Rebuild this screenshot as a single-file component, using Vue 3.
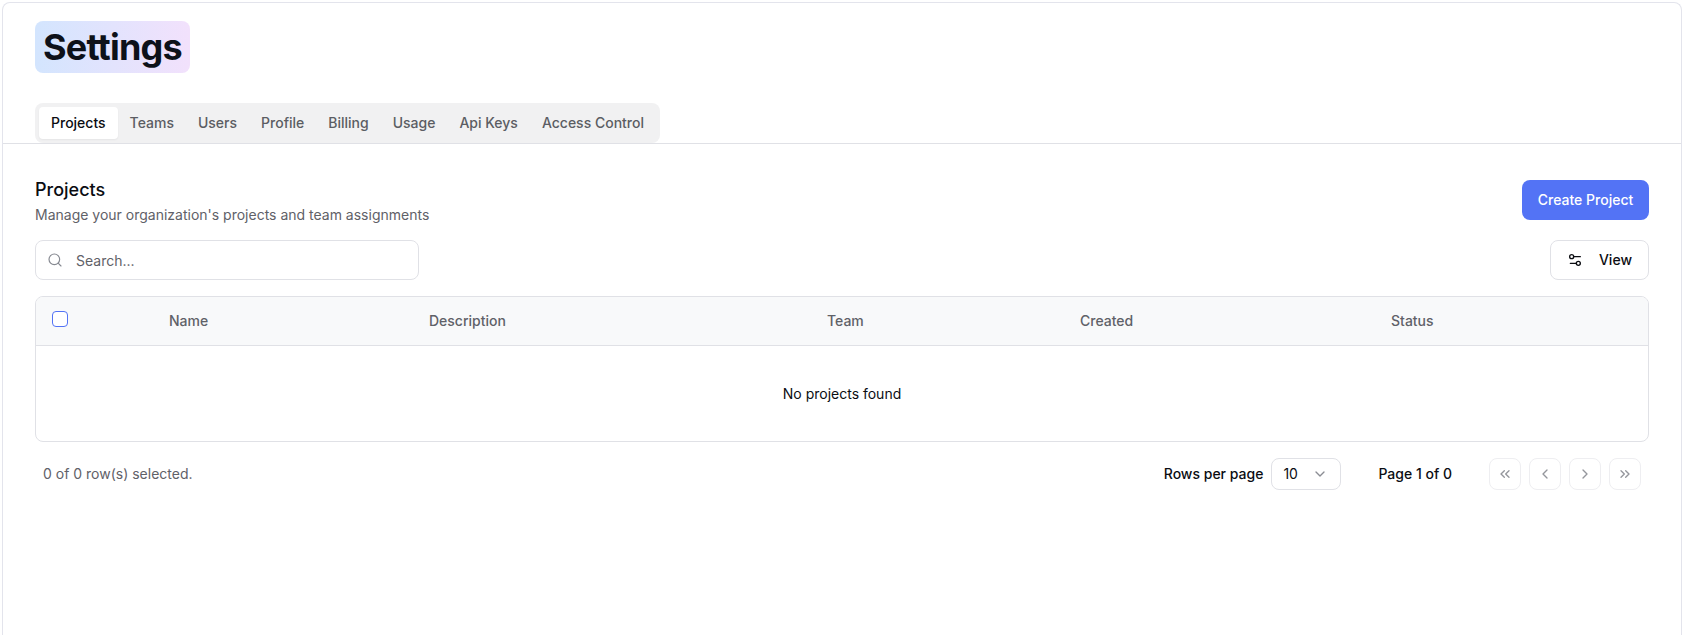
<script setup>
const tabs = ['Projects', 'Teams', 'Users', 'Profile', 'Billing', 'Usage', 'Api Keys', 'Access Control']
const columns = ['Name', 'Description', 'Team', 'Created', 'Status']
const pageButtons = [
  ['m11 17-5-5 5-5', 'm18 17-5-5 5-5'],
  ['m15 18-6-6 6-6'],
  ['m9 18 6-6-6-6'],
  ['m6 17 5-5-5-5', 'm13 17 5-5-5-5'],
]
</script>

<template>
  <div class="frame">
    <header class="top">
      <div class="title-row">
        <h1 class="title">Settings</h1>
      </div>
      <nav class="tabs">
        <button v-for="(tab, i) in tabs" :key="tab" class="tab" :class="{ active: i === 0 }">{{ tab }}</button>
      </nav>
    </header>

    <main class="content">
      <div class="section-head">
        <div>
          <h2 class="section-title">Projects</h2>
          <p class="section-sub">Manage your organization's projects and team assignments</p>
        </div>
        <button class="primary">Create Project</button>
      </div>

      <div class="toolbar">
        <label class="search">
          <svg class="search-icon" viewBox="0 0 24 24" width="16" height="16">
            <circle cx="11" cy="11" r="8" />
            <path d="m21 21-4.3-4.3" />
          </svg>
          <input type="text" placeholder="Search..." />
        </label>
        <button class="view">
          <svg class="view-icon" viewBox="0 0 24 24" width="16" height="16">
            <path d="M20 7h-9" />
            <path d="M14 17H5" />
            <circle cx="17" cy="17" r="3" />
            <circle cx="7" cy="7" r="3" />
          </svg>
          View
        </button>
      </div>

      <div class="table">
        <div class="thead">
          <div class="th"><span class="checkbox"></span></div>
          <div v-for="col in columns" :key="col" class="th">{{ col }}</div>
        </div>
        <div class="empty">No projects found</div>
      </div>

      <div class="footer">
        <span class="selected">0 of 0 row(s) selected.</span>
        <div class="pager">
          <div class="rows">
            <span>Rows per page</span>
            <button class="select">
              10
              <svg class="chev" viewBox="0 0 24 24" width="16" height="16"><path d="m6 9 6 6 6-6" /></svg>
            </button>
          </div>
          <span class="page-label">Page 1 of 0</span>
          <div class="page-buttons">
            <button v-for="(paths, i) in pageButtons" :key="i" class="page-btn">
              <svg viewBox="0 0 24 24" width="16" height="16">
                <path v-for="d in paths" :key="d" :d="d" />
              </svg>
            </button>
          </div>
        </div>
      </div>
    </main>
  </div>
</template>

<style>
html, body {
  background: #fff;
}
</style>

<style scoped>
.frame {
  box-sizing: border-box;
  height: 633px;
  margin: 2px 5px 0 2px;
  background: #fff;
  border: 1px solid #e3e4ec;
  border-bottom: 0;
  border-radius: 8px 8px 0 0;
  overflow: hidden;
  font-family: Inter, "Liberation Sans", sans-serif;
  font-size: 14px;
  line-height: 20px;
  color: #0b0d12;
}

button {
  font: inherit;
  color: inherit;
  background: none;
  border: 0;
  padding: 0;
}

.top {
  padding: 18px 32px 0;
  border-bottom: 1px solid #e0e1e6;
}

.title-row {
  display: flex;
  margin-bottom: 30px;
}

.title {
  margin: 0;
  padding: 6px 8px;
  height: 52px;
  box-sizing: border-box;
  font-size: 36px;
  line-height: 40px;
  font-weight: 700;
  letter-spacing: -0.8px;
  color: #0d1119;
  border-radius: 8px;
  background: linear-gradient(to right, #d3e5fe, #f2e1fc);
}

.tabs {
  display: inline-flex;
  height: 40px;
  box-sizing: border-box;
  padding: 4px;
  border-radius: 8px;
  background: #f1f1f2;
  vertical-align: bottom;
}

.tab {
  padding: 0 12px;
  height: 32px;
  color: #5b5d63;
  font-weight: 500;
  border-radius: 4px;
}

.tab.active {
  color: #0b0d12;
  background: #fff;
  box-shadow: 0 1px 2px rgba(0, 0, 0, 0.05);
}

.content {
  padding: 32px 32px 0;
}

.section-head {
  display: flex;
  justify-content: space-between;
  align-items: flex-start;
}

.section-title {
  margin: 0;
  font-size: 18px;
  line-height: 28px;
  font-weight: 500;
  color: #0b0d12;
}

.section-sub {
  margin: 1px 0 0;
  color: #5f6168;
}

.primary {
  width: 127px;
  height: 40px;
  margin-top: 4px;
  color: #fff;
  font-weight: 500;
  background: #5373f5;
  border-radius: 8px;
}

.toolbar {
  display: flex;
  justify-content: space-between;
  margin-top: 15px;
}

.search {
  display: flex;
  align-items: center;
  gap: 13px;
  width: 384px;
  height: 40px;
  box-sizing: border-box;
  padding: 0 11px;
  border: 1px solid #e0e1e6;
  border-radius: 8px;
}

.search-icon {
  flex: none;
  fill: none;
  stroke: #868991;
  stroke-width: 1.75;
  stroke-linecap: round;
  stroke-linejoin: round;
}

.search input {
  flex: 1;
  min-width: 0;
  border: 0;
  outline: 0;
  padding: 1px 0 0;
  font: inherit;
  background: none;
}

.search input::placeholder {
  color: #5f6168;
  opacity: 1;
}

.view {
  display: flex;
  align-items: center;
  gap: 16px;
  height: 40px;
  box-sizing: border-box;
  padding: 0 16px;
  font-weight: 500;
  border: 1px solid #e0e1e6;
  border-radius: 8px;
}

.view-icon {
  fill: none;
  stroke: #0b0d12;
  stroke-width: 2;
  stroke-linecap: round;
  stroke-linejoin: round;
}

.table {
  margin-top: 16px;
  border: 1px solid #e0e1e6;
  border-radius: 8px;
  overflow: hidden;
}

.thead {
  display: grid;
  grid-template-columns: 117px 260px 398px 253px 311px 1fr;
  height: 49px;
  box-sizing: border-box;
  background: #f8f9fa;
  border-bottom: 1px solid #e0e1e6;
}

.th {
  display: flex;
  align-items: center;
  padding: 0 16px;
  color: #5f6168;
  font-weight: 500;
}

.checkbox {
  width: 16px;
  height: 16px;
  box-sizing: border-box;
  margin-top: -4px;
  border: 1px solid #5373f5;
  border-radius: 4px;
  background: #fff;
}

.empty {
  height: 95px;
  display: flex;
  align-items: center;
  justify-content: center;
  color: #0b0d12;
}

.footer {
  display: flex;
  justify-content: space-between;
  align-items: center;
  height: 32px;
  margin-top: 16px;
  padding: 0 8px;
}

.selected {
  color: #5f6168;
}

.pager {
  display: flex;
  align-items: center;
}

.rows {
  display: flex;
  align-items: center;
  gap: 8px;
  font-weight: 500;
}

.select {
  display: flex;
  align-items: center;
  justify-content: space-between;
  width: 70px;
  height: 32px;
  box-sizing: border-box;
  padding: 0 12px 0 11px;
  font-weight: 400;
  border: 1px solid #e0e1e6;
  border-radius: 8px;
}

.chev {
  fill: none;
  stroke: #8b8d94;
  stroke-width: 2;
  stroke-linecap: round;
  stroke-linejoin: round;
}

.page-label {
  margin-left: 37px;
  font-weight: 500;
}

.page-buttons {
  display: flex;
  gap: 8px;
  margin-left: 37px;
}

.page-btn {
  display: flex;
  align-items: center;
  justify-content: center;
  width: 32px;
  height: 32px;
  box-sizing: border-box;
  border: 1px solid #eeeef1;
  border-radius: 8px;
}

.page-btn svg {
  fill: none;
  stroke: #94969c;
  stroke-width: 2;
  stroke-linecap: round;
  stroke-linejoin: round;
}
</style>
